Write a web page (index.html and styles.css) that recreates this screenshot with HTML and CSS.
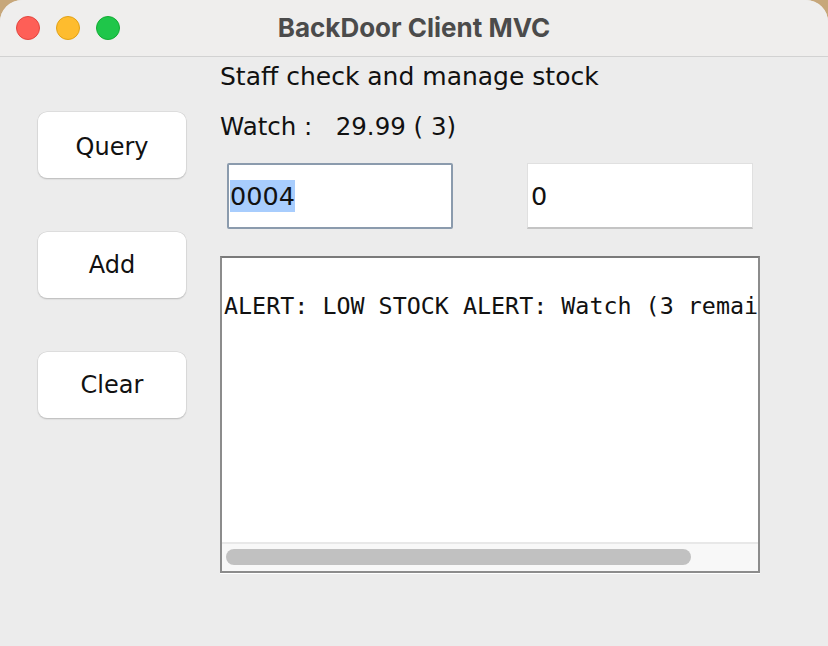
FILE: index.html
```html
<!DOCTYPE html>
<html>
<head>
<meta charset="utf-8">
<link rel="stylesheet" href="styles.css">
</head>
<body>
<div class="window">
  <div class="titlebar">
    <div class="lights">
      <span class="light red"></span>
      <span class="light yellow"></span>
      <span class="light green"></span>
    </div>
    <div class="title">BackDoor Client MVC</div>
  </div>
  <div class="content">
    <div class="buttons">
      <div class="btn">Query</div>
      <div class="btn">Add</div>
      <div class="btn">Clear</div>
    </div>
    <div class="main">
      <div class="label">Staff check and manage stock</div>
      <div class="label label2">Watch :&nbsp;&nbsp; 29.99 ( 3)</div>
      <div class="fields">
        <div class="field focused"><span class="sel">0004</span></div>
        <div class="field plain">0</div>
      </div>
      <div class="textarea">
        <div class="text">ALERT: LOW STOCK ALERT: Watch (3 remai</div>
        <div class="hscroll"><div class="thumb"></div></div>
      </div>
    </div>
  </div>
</div>
</body>
</html>
```
FILE: styles.css
```css
html, body {
  margin: 0;
  padding: 0;
  width: 828px;
  height: 646px;
  overflow: hidden;
  background: #c7a77a;
}
.window {
  width: 828px;
  height: 646px;
  background: #ececec;
  border-radius: 22px 22px 0 0;
  overflow: hidden;
  font-family: "DejaVu Sans", "Noto Sans", sans-serif;
  color: #111;
}
.titlebar {
  height: 56px;
  background: #efeeed;
  border-bottom: 1px solid #d2d2d2;
  position: relative;
  display: flex;
  align-items: center;
  justify-content: center;
}
.lights {
  position: absolute;
  left: 16px;
  top: 16px;
  display: flex;
  gap: 16px;
}
.light {
  width: 24px;
  height: 24px;
  border-radius: 50%;
  box-sizing: border-box;
}
.red { background: #fe5f57; border: 1px solid #e2463f; }
.yellow { background: #febc2e; border: 1px solid #e1a116; }
.green { background: #1fc64a; border: 1px solid #12ac33; }
.title {
  font-family: "Inter", "Liberation Sans", sans-serif;
  font-weight: 700;
  font-size: 26px;
  color: #4b4b4b;
  padding-bottom: 1px;
}
.content {
  display: flex;
  padding-left: 38px;
}
.buttons {
  display: flex;
  flex-direction: column;
  gap: 54px;
  padding-top: 55px;
  width: 148px;
  margin-right: 34px;
}
.btn {
  height: 66px;
  background: #fff;
  border-radius: 9px;
  box-shadow: 0 0 0 0.5px #d0d0d0, 0 1px 1.5px rgba(0,0,0,0.28);
  display: flex;
  align-items: center;
  justify-content: center;
  font-size: 24px;
  color: #111;
}
.btn:first-child {
  padding-top: 3px;
  box-sizing: border-box;
}
.main {
  display: flex;
  flex-direction: column;
}
.label {
  height: 40px;
  line-height: 40px;
  font-size: 25px;
  white-space: nowrap;
}
.label2 {
  margin-top: 10px;
  font-size: 24.5px;
}
.fields {
  display: flex;
  margin-top: 16px;
  padding-left: 7px;
  gap: 74px;
}
.field {
  width: 226px;
  height: 66px;
  box-sizing: border-box;
  background: #fff;
  display: flex;
  align-items: center;
  font-size: 25.5px;
  padding-left: 3px;
}
.focused {
  border: 2px solid #8b9bad;
  border-radius: 2px;
  padding-left: 1px;
}
.plain {
  border: 1px solid #e0e0e0;
  border-bottom: 2px solid #c4c4c4;
  padding-left: 3px;
}
.sel {
  background: #a8cdfd;
  display: inline-block;
  height: 32px;
  line-height: 32px;
}
.textarea {
  margin-top: 27px;
  width: 540px;
  height: 317px;
  box-sizing: border-box;
  border: 2px solid #8c8c8c;
  border-top-color: #7a7a7a;
  background: #fff;
  box-shadow: 0 1px 0 #fff;
  display: flex;
  flex-direction: column;
  overflow: hidden;
}
.text {
  flex: 1;
  padding-top: 34px;
  padding-left: 2px;
  font-family: "DejaVu Sans Mono", "Liberation Mono", monospace;
  font-size: 23.35px;
  line-height: 28px;
  white-space: nowrap;
  overflow: hidden;
}
.hscroll {
  height: 29px;
  box-sizing: border-box;
  background: #f8f8f8;
  border-top: 2px solid #e8e8e8;
  padding: 5px 4px 0 4px;
}
.thumb {
  width: 465px;
  height: 16px;
  border-radius: 8px;
  background: #c1c1c1;
}
```
